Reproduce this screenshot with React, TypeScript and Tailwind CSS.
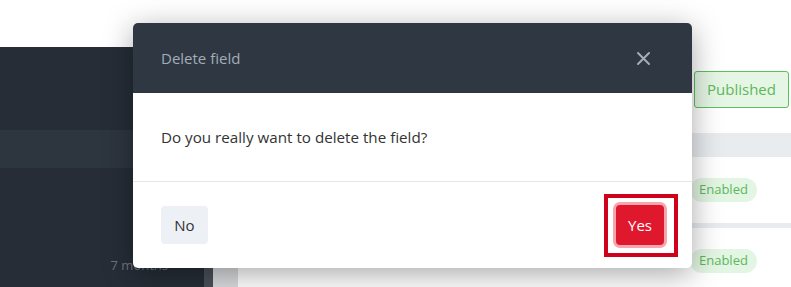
import React from 'react';

const font = { fontFamily: '"Open Sans", "Noto Sans", Arial, sans-serif' };

const Sidebar = () => (
  <div className="flex w-[204px] flex-col bg-[#262d36]">
    <div className="h-[83px] shrink-0" />
    <div className="h-[38px] shrink-0 bg-[#2d353f]" />
    <div className="flex flex-1 items-end justify-end pb-[12px] pr-[24px]">
      <span className="flex items-center gap-[6px] text-[13px] text-[#6c757d]">
        7 months
        <span className="h-[6px] w-[6px] rounded-full bg-[#2fb344]" />
      </span>
    </div>
  </div>
);

const Content = () => (
  <div className="flex flex-1 flex-col overflow-hidden bg-white">
    <div className="h-[24px] shrink-0" />
    <div className="flex shrink-0 justify-end pr-[2px]">
      <span className="flex h-[37px] w-[95px] items-center justify-center rounded-[3px] border border-[#5cc05c] bg-[#e5f6e5] text-[15px] text-[#5cb85c]">
        Published
      </span>
    </div>
    <div className="mt-[25px] h-[24px] shrink-0 bg-[#e9ecef]" />
    <div className="flex h-[66px] shrink-0 items-center pl-[452px]">
      <span className="rounded-full bg-[#e3f5e3] px-[9px] py-[2px] text-[13px] text-[#5cb85c]">Enabled</span>
    </div>
    <div className="h-[5px] shrink-0 bg-[#e9ecef]" />
    <div className="flex h-[66px] shrink-0 items-center pl-[452px]">
      <span className="rounded-full bg-[#e3f5e3] px-[9px] py-[2px] text-[13px] text-[#5cb85c]">Enabled</span>
    </div>
  </div>
);

const CloseIcon = () => (
  <svg width="15" height="15" viewBox="0 0 15 15" fill="none" stroke="#a3adb8" strokeWidth="2" strokeLinecap="round">
    <path d="M2 2 L13 13 M13 2 L2 13" />
  </svg>
);

const DeleteModal = () => (
  <div className="absolute left-[133px] top-[23px] flex w-[559px] flex-col overflow-hidden rounded-[5px] bg-white shadow-[0_6px_30px_rgba(0,0,0,0.35)]">
    <div className="flex h-[70px] items-center justify-between bg-[#2e3742] pl-[28px] pr-[41px]">
      <span className="text-[15px] text-[#a3adb8]">Delete field</span>
      <CloseIcon />
    </div>
    <div className="flex h-[88px] items-center px-[28px] text-[15.2px] text-[#333]">
      Do you really want to delete the field?
    </div>
    <div className="flex h-[87px] items-center justify-between border-t border-[#e6e6e6] px-[28px]">
      <button className="h-[38px] w-[47px] rounded-[4px] bg-[#edf1f5] text-[15px] text-[#333]">No</button>
      <div className="relative">
        <button className="h-[40px] w-[48px] rounded-[4px] bg-[#e0182d] text-[15px] text-white ring-3 ring-[#f7a6ae]">
          Yes
        </button>
        <div className="absolute -bottom-[12px] -left-[12px] -right-[14px] -top-[11px] border-4 border-[#d0021b]" />
      </div>
    </div>
  </div>
);

export default function App() {
  return (
    <div className="relative h-[287px] w-[791px] overflow-hidden bg-white" style={font}>
      <div className="h-[47px] bg-white shadow-[0_2px_4px_rgba(0,0,0,0.08)]" />
      <div className="flex h-[240px]">
        <Sidebar />
        <div className="w-[9px] bg-[#4a5058]" />
        <div className="w-[25px] bg-[#d8dadd]" />
        <Content />
      </div>
      <DeleteModal />
    </div>
  );
}
